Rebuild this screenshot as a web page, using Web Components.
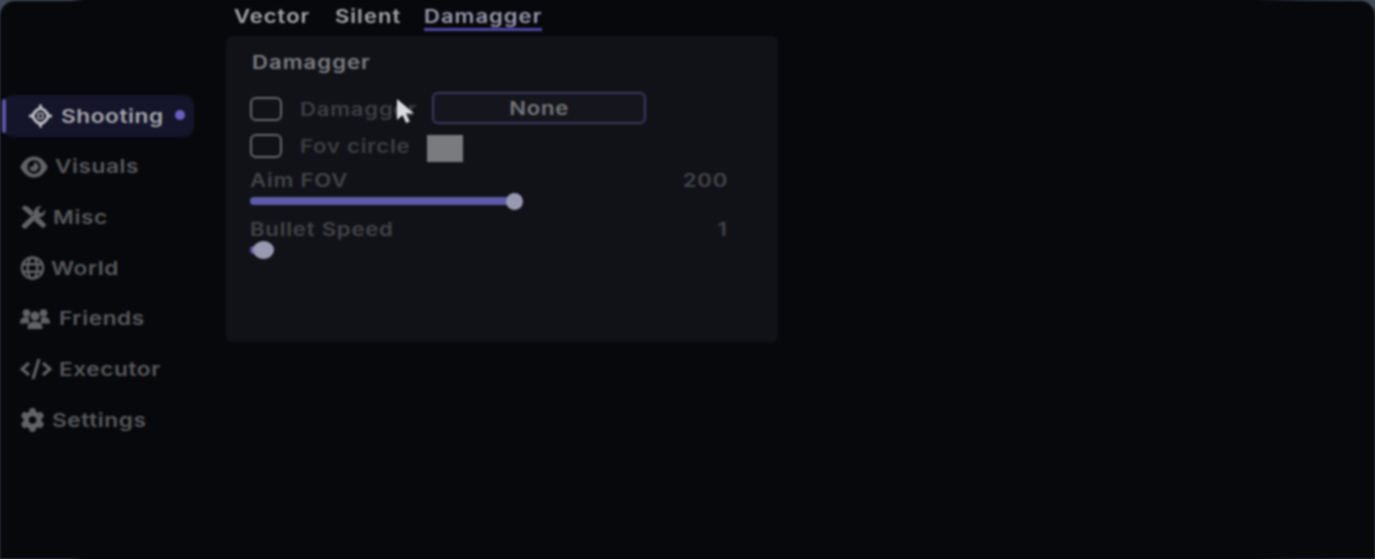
<!DOCTYPE html>
<html lang="en"><head><meta charset="utf-8"><title>Damagger</title>
<style>
html,body{margin:0;height:100%;background:#07080c;overflow:hidden}
body{font-family:Inter,"Liberation Sans",sans-serif}
</style></head><body>
<app-shell>
  <side-nav slot="nav">
    <nav-item label="Shooting" icon="crosshair" gap="9" active></nav-item>
    <nav-item label="Visuals" icon="eye" gap="7"></nav-item>
    <nav-item label="Misc" icon="tools" gap="6"></nav-item>
    <nav-item label="World" icon="globe" gap="6"></nav-item>
    <nav-item label="Friends" icon="users" gap="9"></nav-item>
    <nav-item label="Executor" icon="code" gap="7"></nav-item>
    <nav-item label="Settings" icon="gear" gap="7"></nav-item>
  </side-nav>
  <main-area slot="main">
    <tab-bar><tab-item w="76">Vector</tab-item><tab-item w="64">Silent</tab-item><tab-item w="118" active>Damagger</tab-item></tab-bar>
    <settings-panel title-text="Damagger">
      <check-row label="Damagger" label-w="132"><key-button>None</key-button></check-row>
      <check-row label="Fov circle" label-w="127"><color-swatch></color-swatch></check-row>
      <slider-row label="Aim FOV" value="200" fill="264" knob="17"></slider-row>
      <slider-row label="Bullet Speed" value="1" fill="13" knob="18" wide></slider-row>
    </settings-panel>
  </main-area>
  <mouse-cursor slot="overlay"></mouse-cursor>
</app-shell>
<script>
const ICONS={
crosshair:{w:23,s:`<g fill="none" stroke="currentColor"><rect x="5" y="5" width="14" height="14" rx="5" stroke-width="3.200" transform="rotate(45 12 12)"/><path stroke-width="3" d="M12 0v6M12 18v6M0 12h6M18 12h6"/><rect x="9.500" y="9.500" width="5" height="5" rx="1" stroke-width="1.600"/></g>`},
eye:{w:28,v:"0 0 576 512",s:`<path fill="currentColor" d="M288 32c-80.8 0-145.5 36.8-192.6 80.6C48.6 156 17.3 208 2.5 243.7c-3.3 7.9-3.3 16.7 0 24.6C17.3 304 48.6 356 95.4 399.4C142.5 443.2 207.2 480 288 480s145.5-36.8 192.6-80.6c46.8-43.5 78.1-95.4 93-131.1c3.3-7.9 3.3-16.7 0-24.6c-14.9-35.7-46.2-87.7-93-131.1C433.5 68.8 368.8 32 288 32zM144 256a144 144 0 1 1 288 0 144 144 0 1 1 -288 0zm144-64c0 35.3-28.7 64-64 64c-7.1 0-13.9-1.2-20.3-3.3c-5.5-1.8-11.9 1.6-11.7 7.4c.3 6.9 1.3 13.8 3.2 20.7c13.7 51.2 66.4 81.6 117.6 67.9s81.6-66.4 67.9-117.6c-11.1-41.5-47.8-69.4-88.6-71.1c-5.8-.2-9.2 6.1-7.4 11.7c2.1 6.4 3.3 13.2 3.3 20.3z"/>`},
tools:{w:27,v:"0 0 26 24",s:`<g fill="currentColor"><path d="M1 3l3-2.500 4 1.500 5.500 5.500-3.500 3.500L4.500 6z"/><path d="M2 19.500L13.500 8.500c-.6-4 2.500-7.500 8-7.500l-3.500 3.600.5 3 3 .6L25 4.500c.2 5.500-3.800 8.500-8 7.800L6 23c-1 1-2.300 1-3.300 0l-.9-.9c-.8-.8-.8-1.800.2-2.600z"/><path d="M13.500 15.500l4-4 7 6.700c1.100 1.200 1.100 2.700 0 3.800s-2.600 1.100-3.800 0z"/></g>`},
globe:{w:25,s:`<g fill="none" stroke="currentColor" stroke-width="2.400"><circle cx="12" cy="12" r="10.600"/><ellipse cx="12" cy="12" rx="4.800" ry="10.600"/><path d="M1.500 8.300h21M1.500 15.700h21"/></g>`},
users:{w:30,v:"0 0 30 24",s:`<g fill="currentColor"><circle cx="6.500" cy="6" r="3.800"/><circle cx="23.500" cy="6" r="3.800"/><circle cx="15" cy="9" r="4.500"/><path d="M0 16c0-4 2.500-6 6-6 1.400 0 2.600.4 3.500 1-.8 1.600-.7 3.500.3 5.500H1c-.6 0-1-.1-1-.5zM30 16c0-4-2.500-6-6-6-1.400 0-2.600.4-3.500 1 .8 1.600.7 3.500-.3 5.500H29c.6 0 1-.1 1-.5zM7.500 21c0-4 3-6.500 7.500-6.500s7.500 2.500 7.500 6.500c0 .8-.4 1-1 1H8.500c-.6 0-1-.2-1-1z"/></g>`},
code:{w:32,v:"0 0 32 24",s:`<g fill="none" stroke="currentColor" stroke-width="3"><path d="M9 6l-7 6 7 6M23 6l7 6-7 6M19 2l-6 20"/></g>`},
gear:{w:25,v:"0 0 512 512",s:`<path fill="currentColor" d="M495.900 166.600c3.200 8.700 .5 18.400-6.400 24.600l-43.300 39.400c1.100 8.300 1.700 16.800 1.700 25.400s-.6 17.100-1.700 25.400l43.300 39.400c6.900 6.200 9.600 15.900 6.400 24.600c-4.400 11.900-9.700 23.300-15.800 34.300l-4.700 8.100c-6.600 11-14 21.400-22.100 31.200c-5.900 7.200-15.700 9.600-24.500 6.800l-55.700-17.700c-13.400 10.300-28.200 18.900-44 25.400l-12.500 57.100c-2 9.100-9 16.300-18.200 17.800c-13.800 2.300-28 3.500-42.500 3.500s-28.700-1.200-42.500-3.500c-9.200-1.500-16.200-8.700-18.200-17.800l-12.500-57.100c-15.800-6.500-30.600-15.100-44-25.400L83.100 425.900c-8.800 2.800-18.600 .3-24.500-6.800c-8.100-9.800-15.500-20.200-22.100-31.200l-4.700-8.100c-6.100-11-11.400-22.400-15.800-34.300c-3.200-8.700-.5-18.400 6.400-24.600l43.300-39.400C64.600 273.100 64 264.600 64 256s.6-17.100 1.700-25.400L22.400 191.200c-6.900-6.200-9.600-15.900-6.400-24.600c4.400-11.900 9.700-23.300 15.800-34.300l4.700-8.100c6.600-11 14-21.400 22.100-31.200c5.900-7.200 15.700-9.600 24.500-6.800l55.700 17.700c13.400-10.300 28.200-18.900 44-25.400l12.500-57.100c2-9.100 9-16.300 18.200-17.800C227.300 1.200 241.500 0 256 0s28.700 1.200 42.500 3.500c9.200 1.500 16.200 8.700 18.200 17.800l12.500 57.100c15.800 6.500 30.600 15.100 44 25.400l55.700-17.700c8.800-2.800 18.600-.3 24.500 6.800c8.100 9.800 15.500 20.200 22.100 31.200l4.700 8.100c6.100 11 11.400 22.400 15.800 34.300zM256 336a80 80 0 1 0 0-160 80 80 0 1 0 0 160z"/>`}
};
/* the reference is a horizontally stretched capture, so the text is widened */
const WIDE=`display:inline-block;transform:scaleX(1.19);transform-origin:0 50%;white-space:nowrap`;
function def(name,html){
  customElements.define(name,class extends HTMLElement{
    constructor(){super();this.attachShadow({mode:"open"});}
    connectedCallback(){
      const g=k=>this.getAttribute(k);
      this.shadowRoot.innerHTML=typeof html==="function"?html(g):html;
    }
  });
}
def("app-shell",`<style>
:host{display:block;position:relative;width:1375px;height:559px;overflow:hidden;background:linear-gradient(90deg,#414a58 0,#414a58 70px,#07080c 84px,#07080c 1255px,#2b3340 1300px,#414a58 1375px)}
.win{margin-top:1px;height:558px;background:#07080b;border-radius:15px 15px 0 0;display:flex;filter:blur(.8px)}
.nav{flex:0 0 226px}.main{flex:1;min-width:0}
</style><div class="win"><div class="nav"><slot name="nav"></slot></div><div class="main"><slot name="main"></slot></div><slot name="overlay"></slot></div>`);
def("side-nav",`<style>:host{display:flex;flex-direction:column;gap:8.700px;padding:94px 0 0 2px}</style><slot></slot>`);
def("nav-item",g=>{
  const ic=ICONS[g("icon")],a=g("active")!==null,v=ic.v||"0 0 24 24";
  return `<style>
:host{display:block;width:192px;height:42px;font-size:19px;font-weight:600;letter-spacing:.5px}
.r{position:relative;height:100%;display:flex;align-items:center;gap:${g("gap")}px;padding-left:${a?27:18}px;box-sizing:border-box;border-radius:10px;color:${a?"#a8a8ad":"#58595d"};background:${a?"#14142a":"none"}}
svg{flex:none;width:${ic.w}px;height:24px;${a?"color:#bcbcc0":"color:#626367"}}
span{${WIDE}}
.bar{position:absolute;left:0;top:4px;bottom:4px;width:4px;background:#5f56a8;border-radius:2px}
.dot{position:absolute;right:9px;top:15px;width:10px;height:10px;border-radius:50%;background:#6a60c0}
</style><div class="r">${a?'<i class="bar"></i>':""}<svg viewBox="${v}" aria-hidden="true">${ic.s}</svg><span>${g("label")}</span>${a?'<i class="dot"></i>':""}</div>`});
def("main-area",`<style>:host{display:block;padding-top:1px}</style><slot></slot>`);
def("tab-bar",`<style>:host{display:flex;gap:25px;padding-left:8px;height:34px;box-sizing:border-box}</style><slot></slot>`);
def("tab-item",g=>{const a=g("active")!==null;return `<style>
:host{display:block;width:${g("w")}px;font-size:18.500px;font-weight:600;letter-spacing:.85px;line-height:29px;color:${a?"#9a99b2":"#a8a8ac"}}
.u{height:29px;box-sizing:border-box;${a?"border-bottom:3px solid #4f48a6;":""}}
span{${WIDE}}
</style><div class="u"><span><slot></slot></span></div>`});
def("settings-panel",g=>`<style>
:host{display:block;width:552px;height:306px;box-sizing:border-box;background:#111218;border-radius:6px;padding:14px 24px 0}
h2{margin:0 0 0 2px;font-size:18.500px;line-height:24px;font-weight:600;letter-spacing:.9px;color:#7f7f83}
h2 span{${WIDE}}
.c{margin-top:16px;display:flex;flex-direction:column}
</style><h2><span>${g("title-text")}</span></h2><div class="c"><slot></slot></div>`);
def("check-row",g=>`<style>
:host{display:flex;align-items:center;height:37px;font-size:18.500px;font-weight:600;letter-spacing:.7px;color:#3e3f43}
.b{flex:none;width:32px;height:24px;box-sizing:border-box;border:2px solid #68696d;border-radius:6px;margin-right:18px}
.l{flex:none;width:${g("label-w")}px}
span{${WIDE}}
</style><div class="b"></div><div class="l"><span>${g("label")}</span></div><slot></slot>`);
def("key-button",`<style>
:host{display:flex;align-items:center;justify-content:center;width:214px;height:32px;margin-top:-2px;box-sizing:border-box;border:2px solid #3a3960;border-radius:6px;background:#15151d;color:#77777b;font-size:18.500px;font-weight:600;letter-spacing:.7px}
span{${WIDE};transform-origin:50% 50%}
</style><span><slot></slot></span>`);
def("color-swatch",`<style>:host{display:block;width:36px;height:27px;margin-top:5px;background:#7a7b7e}</style>`);
def("slider-row",g=>{const f=+g("fill"),k=+g("knob"),w=g("wide")!==null?k+3:k;return `<style>
:host{display:block;margin:4px 0 8px;font-size:18.500px;font-weight:600;letter-spacing:.7px;color:#434448}
.t{display:flex;justify-content:space-between;width:478px;line-height:25px;height:25px}
.a{${WIDE}}.z{${WIDE};transform-origin:100% 50%}
.tr{position:relative;height:8px;width:${f}px;margin-top:4px;background:#5f5aa5;border-radius:4px}
.k{position:absolute;top:${(8-k)/2}px;right:${-w/2}px;width:${w}px;height:${k}px;border-radius:50%;background:#9a99b2}
</style><div class="t"><span class="a">${g("label")}</span><span class="z">${g("value")}</span></div><div class="tr"><i class="k"></i></div>`});
def("mouse-cursor",`<style>:host{position:absolute;left:396px;top:97px;width:22px;height:28px}svg{display:block}</style>
<svg width="22" height="28" viewBox="0 0 22 28" aria-hidden="true"><path fill="#dcdce0" d="M1 1v21l5.500-5 3.700 8 3.600-1.600-3.700-7.800H18z"/></svg>`);
</script>
</body></html>
